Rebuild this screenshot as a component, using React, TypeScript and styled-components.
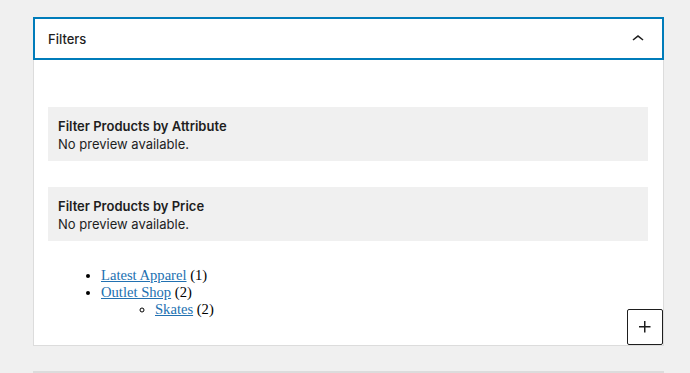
import React from "react";
import styled, { createGlobalStyle } from "styled-components";

const Global = createGlobalStyle`
  html, body { margin: 0; padding: 0; background: #f0f0f0; }
  body { font-family: Inter, "Noto Sans", "Liberation Sans", sans-serif; color: #1e1e1e; }
`;

const Page = styled.div`
  padding: 17px 26px 0 33px;
  height: 373px;
  box-sizing: border-box;
  overflow: hidden;
  display: flex;
  flex-direction: column;
  gap: 25px;
`;

const Panel = styled.section`
  position: relative;
  width: 631px;
  background: #fff;
`;

const Header = styled.button`
  all: unset;
  box-sizing: border-box;
  width: 631px;
  height: 43px;
  border: 2px solid #007cba;
  display: flex;
  align-items: center;
  justify-content: space-between;
  padding: 0 12px 0 13px;
  font-family: Inter, "Noto Sans", "Liberation Sans", sans-serif;
  font-size: 13px;
  font-weight: 500;
  color: #1e1e1e;
`;

const Body = styled.div`
  box-sizing: border-box;
  border: 1px solid #dcdcdc;
  border-top: none;
  padding: 47px 15px 28px 14px;
  height: 286px;
`;

const Placeholder = styled.div`
  background: #f0f0f0;
  height: 54px;
  box-sizing: border-box;
  padding: 10px 10px 8px;
  font-size: 13px;
  line-height: 18px;
  margin-bottom: 26px;
`;

const Title = styled.div`
  font-weight: 600;
  color: #1e1e1e;
`;

const Note = styled.div`
  color: #1e1e1e;
`;

const List = styled.ul<{ $nested?: boolean }>`
  margin: ${(p) => (p.$nested ? "0" : "1px 0 0")};
  padding-left: ${(p) => (p.$nested ? "54px" : "53px")};
  list-style: ${(p) => (p.$nested ? "circle" : "disc")};
  font-family: "Liberation Serif", "Times New Roman", serif;
  font-size: 14.6px;
  line-height: 17px;
  color: #000;
`;

const Link = styled.a`
  color: #2271b1;
  text-decoration: underline;
`;

const Appender = styled.button`
  all: unset;
  position: absolute;
  right: 1px;
  bottom: 1px;
  width: 36px;
  height: 36px;
  box-sizing: border-box;
  border: 1px solid #1e1e1e;
  border-radius: 2px;
  background: #fff;
  display: flex;
  align-items: center;
  justify-content: center;
`;

const NextPanel = styled.div`
  width: 631px;
  height: 20px;
  box-sizing: border-box;
  background: #fff;
  border: 1px solid #dcdcdc;
`;

const ChevronUp = () => (
  <svg width="24" height="24" viewBox="0 0 24 24" aria-hidden="true">
    <path d="M6.5 12.4L12 8l5.5 4.4-.9 1.2L12 10l-4.5 3.6-1-1.2z" fill="#1e1e1e" />
  </svg>
);

const Plus = () => (
  <svg width="24" height="24" viewBox="0 0 24 24" aria-hidden="true">
    <path d="M11 12.5V17.5H12.5V12.5H17.5V11H12.5V6H11V11H6V12.5H11Z" fill="#1e1e1e" />
  </svg>
);

const blocks = ["Filter Products by Attribute", "Filter Products by Price"];

export default function App() {
  return (
    <>
      <Global />
      <Page>
        <Panel>
          <Header>
            <span>Filters</span>
            <ChevronUp />
          </Header>
          <Body>
            {blocks.map((b) => (
              <Placeholder key={b}>
                <Title>{b}</Title>
                <Note>No preview available.</Note>
              </Placeholder>
            ))}
            <List>
              <li>
                <Link href="#">Latest Apparel</Link> (1)
              </li>
              <li>
                <Link href="#">Outlet Shop</Link> (2)
                <List $nested>
                  <li>
                    <Link href="#">Skates</Link> (2)
                  </li>
                </List>
              </li>
            </List>
          </Body>
          <Appender aria-label="Add block">
            <Plus />
          </Appender>
        </Panel>
        <NextPanel />
      </Page>
    </>
  );
}
